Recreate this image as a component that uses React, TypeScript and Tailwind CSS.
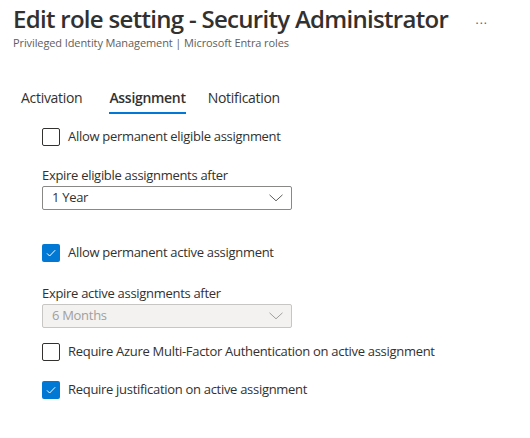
import React from 'react';

const font = { fontFamily: '"Open Sans", "Noto Sans", sans-serif' };

function Checkbox({ checked, label }: { checked: boolean; label: string }) {
  return (
    <label className="flex items-center gap-[8px] h-[18px]">
      <span
        className={`flex items-center justify-center w-[18px] h-[18px] rounded-[2px] ${
          checked ? 'bg-[#0078d4]' : 'border border-[#323130] bg-white'
        }`}
      >
        {checked && (
          <svg width="12" height="12" viewBox="0 0 12 12" fill="none">
            <path d="M2 6.4 L4.6 9 L10.2 3.2" stroke="white" strokeWidth="1" />
          </svg>
        )}
      </span>
      <span className="text-[13px] tracking-[-0.3px] text-[#323130]">{label}</span>
    </label>
  );
}

function Dropdown({ value, disabled }: { value: string; disabled?: boolean }) {
  return (
    <div
      className={`flex items-center justify-between w-[250px] h-[24px] rounded-[2px] border pl-[9px] pr-[8px] ${
        disabled ? 'bg-[#f3f2f1] border-[#c8c6c4] text-[#a19f9d]' : 'bg-white border-[#8a8886] text-[#323130]'
      }`}
    >
      <span className="text-[13px] tracking-[-0.3px]">{value}</span>
      <svg width="14" height="8" viewBox="0 0 14 8" fill="none">
        <path d="M0.5 0.8 L7 6.8 L13.5 0.8" stroke={disabled ? '#a19f9d' : '#605e5c'} strokeWidth="1" />
      </svg>
    </div>
  );
}

export default function App() {
  return (
    <div className="w-[530px] h-[438px] bg-white overflow-hidden" style={font}>
      {/* Header */}
      <div className="flex items-start justify-between pl-[13px] pr-[42px] pt-[3px]">
        <div>
          <h1 className="text-[24px] leading-[32px] font-semibold tracking-[-0.7px] whitespace-nowrap text-[#323130]">
            Edit role setting - Security Administrator
          </h1>
          <p className="text-[11px] leading-[16px] tracking-[-0.1px] text-[#605e5c]">
            Privileged Identity Management | Microsoft Entra roles
          </p>
        </div>
        <span className="text-[12px] text-[#605e5c] mt-[8px] tracking-[1px]">...</span>
      </div>

      {/* Tabs */}
      <div className="flex pl-[21px] mt-[37px] text-[14px] leading-[20px] tracking-[-0.3px] text-[#323130]">
        <div className="flex flex-col">
          <span>Activation</span>
          <span className="mt-[4px] h-[2px]" />
        </div>
        <div className="flex flex-col ml-[27px]">
          <span className="font-semibold">Assignment</span>
          <span className="mt-[4px] h-[2px] bg-[#0078d4]" />
        </div>
        <div className="flex flex-col ml-[22px]">
          <span>Notification</span>
          <span className="mt-[4px] h-[2px]" />
        </div>
      </div>

      {/* Settings */}
      <div className="pl-[42px] pt-[14px]">
        <Checkbox checked={false} label="Allow permanent eligible assignment" />

        <div className="mt-[20px] text-[13px] leading-[18px] tracking-[-0.3px] text-[#323130]">
          Expire eligible assignments after
        </div>
        <div className="mt-[2px]">
          <Dropdown value="1 Year" />
        </div>

        <div className="mt-[34px]">
          <Checkbox checked label="Allow permanent active assignment" />
        </div>

        <div className="mt-[22px] text-[13px] leading-[18px] tracking-[-0.3px] text-[#323130]">
          Expire active assignments after
        </div>
        <div className="mt-[2px]">
          <Dropdown value="6 Months" disabled />
        </div>

        <div className="mt-[15px]">
          <Checkbox checked={false} label="Require Azure Multi-Factor Authentication on active assignment" />
        </div>
        <div className="mt-[20px]">
          <Checkbox checked label="Require justification on active assignment" />
        </div>
      </div>
    </div>
  );
}
